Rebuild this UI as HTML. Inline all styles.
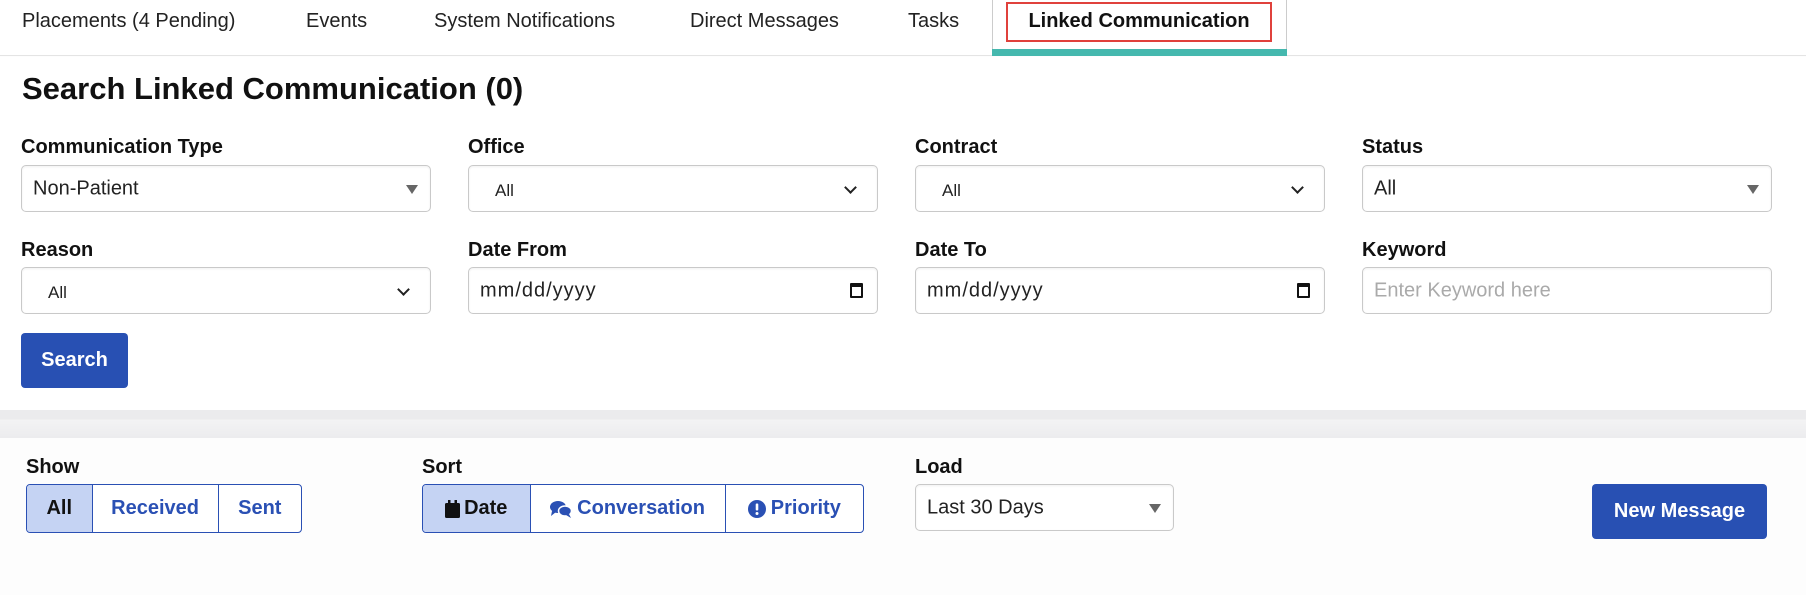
<!DOCTYPE html>
<html><head><style>
*{box-sizing:border-box;margin:0;padding:0}
body{width:1806px;height:595px;background:#fdfdfd;font-family:"Liberation Sans",sans-serif;color:#111;position:relative;overflow:hidden}
.a{position:absolute}
.tab{position:absolute;top:10px;font-size:20px;color:#222;white-space:nowrap}
.lbl{position:absolute;font-size:20px;font-weight:bold;color:#111;white-space:nowrap}
.box{position:absolute;background:#fff;border:1px solid #c9c9c9;border-radius:5px;box-shadow:inset 0 1px 2px rgba(0,0,0,.06);font-size:20px;color:#222}
.box span{position:absolute;left:11px;top:50%;transform:translateY(-50%);white-space:nowrap}
.tri{position:absolute;right:12px;top:50%;margin-top:-4px;width:0;height:0;border-left:6px solid transparent;border-right:6px solid transparent;border-top:9px solid #666}
.chev{position:absolute;right:22px;top:50%;margin-top:-6px;width:9px;height:9px;border-right:2px solid #222;border-bottom:2px solid #222;transform:rotate(45deg)}
.cal{position:absolute;right:14px;top:50%;margin-top:-8px;width:13px;height:15px;border:2px solid #111;border-top-width:4px;border-radius:1px}
.grp{position:absolute;border:1px solid #2a50b4;border-radius:4px;display:flex;overflow:hidden;height:49px;background:#fff}
.grp div{height:100%;display:flex;align-items:center;justify-content:center;font-size:20px;font-weight:bold;color:#2a50b4;border-left:1px solid #2a50b4;white-space:nowrap}
.grp div:first-child{border-left:none;background:#c5d3f3;color:#111}
.btn{position:absolute;background:#2850b3;color:#fff;font-weight:bold;font-size:20px;border-radius:4px;display:flex;align-items:center;justify-content:center;white-space:nowrap}
.dt{letter-spacing:1px}
</style></head><body>
<div class="a" style="left:0;top:0;width:1806px;height:56px;background:#fff;border-bottom:1px solid #e4e4e4"></div>
<div class="tab" style="left:22px">Placements (4 Pending)</div>
<div class="tab" style="left:306px">Events</div>
<div class="tab" style="left:434px">System Notifications</div>
<div class="tab" style="left:690px">Direct Messages</div>
<div class="tab" style="left:908px">Tasks</div>
<div class="a" style="left:992px;top:0;width:295px;height:56px;background:#fff;border-left:1px solid #ccc;border-right:1px solid #ccc"></div>
<div class="a" style="left:992px;top:49px;width:295px;height:7px;background:#45b8ae"></div>
<div class="a" style="left:1006px;top:2px;width:266px;height:40px;border:2px solid #e0413c"></div>
<div class="tab" style="left:1006px;width:266px;text-align:center;font-weight:bold;color:#111;top:10px">Linked Communication</div>

<div class="a" style="left:0;top:57px;width:1806px;height:353px;background:#fff"></div>
<div class="a" style="left:22px;top:71px;font-size:31px;font-weight:bold;white-space:nowrap">Search Linked Communication (0)</div>

<div class="lbl" style="left:21px;top:136px">Communication Type</div>
<div class="box" style="left:21px;top:165px;width:410px;height:47px"><span>Non-Patient</span><i class="tri"></i></div>
<div class="lbl" style="left:468px;top:136px">Office</div>
<div class="box" style="left:468px;top:165px;width:410px;height:47px"><span style="left:26px;top:56%;font-size:17px">All</span><i class="chev"></i></div>
<div class="lbl" style="left:915px;top:136px">Contract</div>
<div class="box" style="left:915px;top:165px;width:410px;height:47px"><span style="left:26px;top:56%;font-size:17px">All</span><i class="chev"></i></div>
<div class="lbl" style="left:1362px;top:136px">Status</div>
<div class="box" style="left:1362px;top:165px;width:410px;height:47px"><span>All</span><i class="tri"></i></div>

<div class="lbl" style="left:21px;top:239px">Reason</div>
<div class="box" style="left:21px;top:267px;width:410px;height:47px"><span style="left:26px;top:56%;font-size:17px">All</span><i class="chev"></i></div>
<div class="lbl" style="left:468px;top:239px">Date From</div>
<div class="box" style="left:468px;top:267px;width:410px;height:47px"><span class="dt">mm/dd/yyyy</span><i class="cal"></i></div>
<div class="lbl" style="left:915px;top:239px">Date To</div>
<div class="box" style="left:915px;top:267px;width:410px;height:47px"><span class="dt">mm/dd/yyyy</span><i class="cal"></i></div>
<div class="lbl" style="left:1362px;top:239px">Keyword</div>
<div class="box" style="left:1362px;top:267px;width:410px;height:47px"><span style="color:#aaa">Enter Keyword here</span></div>

<div class="btn" style="left:21px;top:333px;width:107px;height:55px">Search</div>

<div class="a" style="left:0;top:410px;width:1806px;height:28px;background:linear-gradient(#ebebed 0,#ebebed 9px,#f3f3f4 10px,#ececee 28px)"></div>

<div class="lbl" style="left:26px;top:456px">Show</div>
<div class="grp" style="left:26px;top:484px;width:276px"><div style="width:65px">All</div><div style="width:127px">Received</div><div style="width:84px">Sent</div></div>
<div class="lbl" style="left:422px;top:456px">Sort</div>
<div class="grp" style="left:422px;top:484px;width:442px">
<div style="width:107px"><svg width="15" height="18" viewBox="0 0 15 18" style="margin-right:4px"><rect x="0" y="3" width="15" height="15" rx="1.5" fill="#111"/><rect x="3" y="0" width="2.5" height="5" fill="#111"/><rect x="9.5" y="0" width="2.5" height="5" fill="#111"/></svg>Date</div>
<div style="width:196px"><svg width="22" height="18" viewBox="0 0 22 18" style="margin-right:5px"><ellipse cx="8" cy="7" rx="8" ry="6" fill="#2a50b4"/><path d="M2 11 L1 16 L6 12Z" fill="#2a50b4"/><ellipse cx="15" cy="11" rx="6.5" ry="5" fill="#2a50b4" stroke="#fff" stroke-width="1.5"/><path d="M19 14 L21 18 L16 15Z" fill="#2a50b4"/></svg>Conversation</div>
<div style="width:139px"><svg width="18" height="18" viewBox="0 0 18 18" style="margin-right:5px"><circle cx="9" cy="9" r="9" fill="#2a50b4"/><rect x="7.7" y="3.5" width="2.6" height="7" rx="1" fill="#fff"/><circle cx="9" cy="13.5" r="1.5" fill="#fff"/></svg>Priority</div>
</div>
<div class="lbl" style="left:915px;top:456px">Load</div>
<div class="box" style="left:915px;top:484px;width:259px;height:47px"><span>Last 30 Days</span><i class="tri"></i></div>
<div class="btn" style="left:1592px;top:484px;width:175px;height:55px">New Message</div>
</body></html>
